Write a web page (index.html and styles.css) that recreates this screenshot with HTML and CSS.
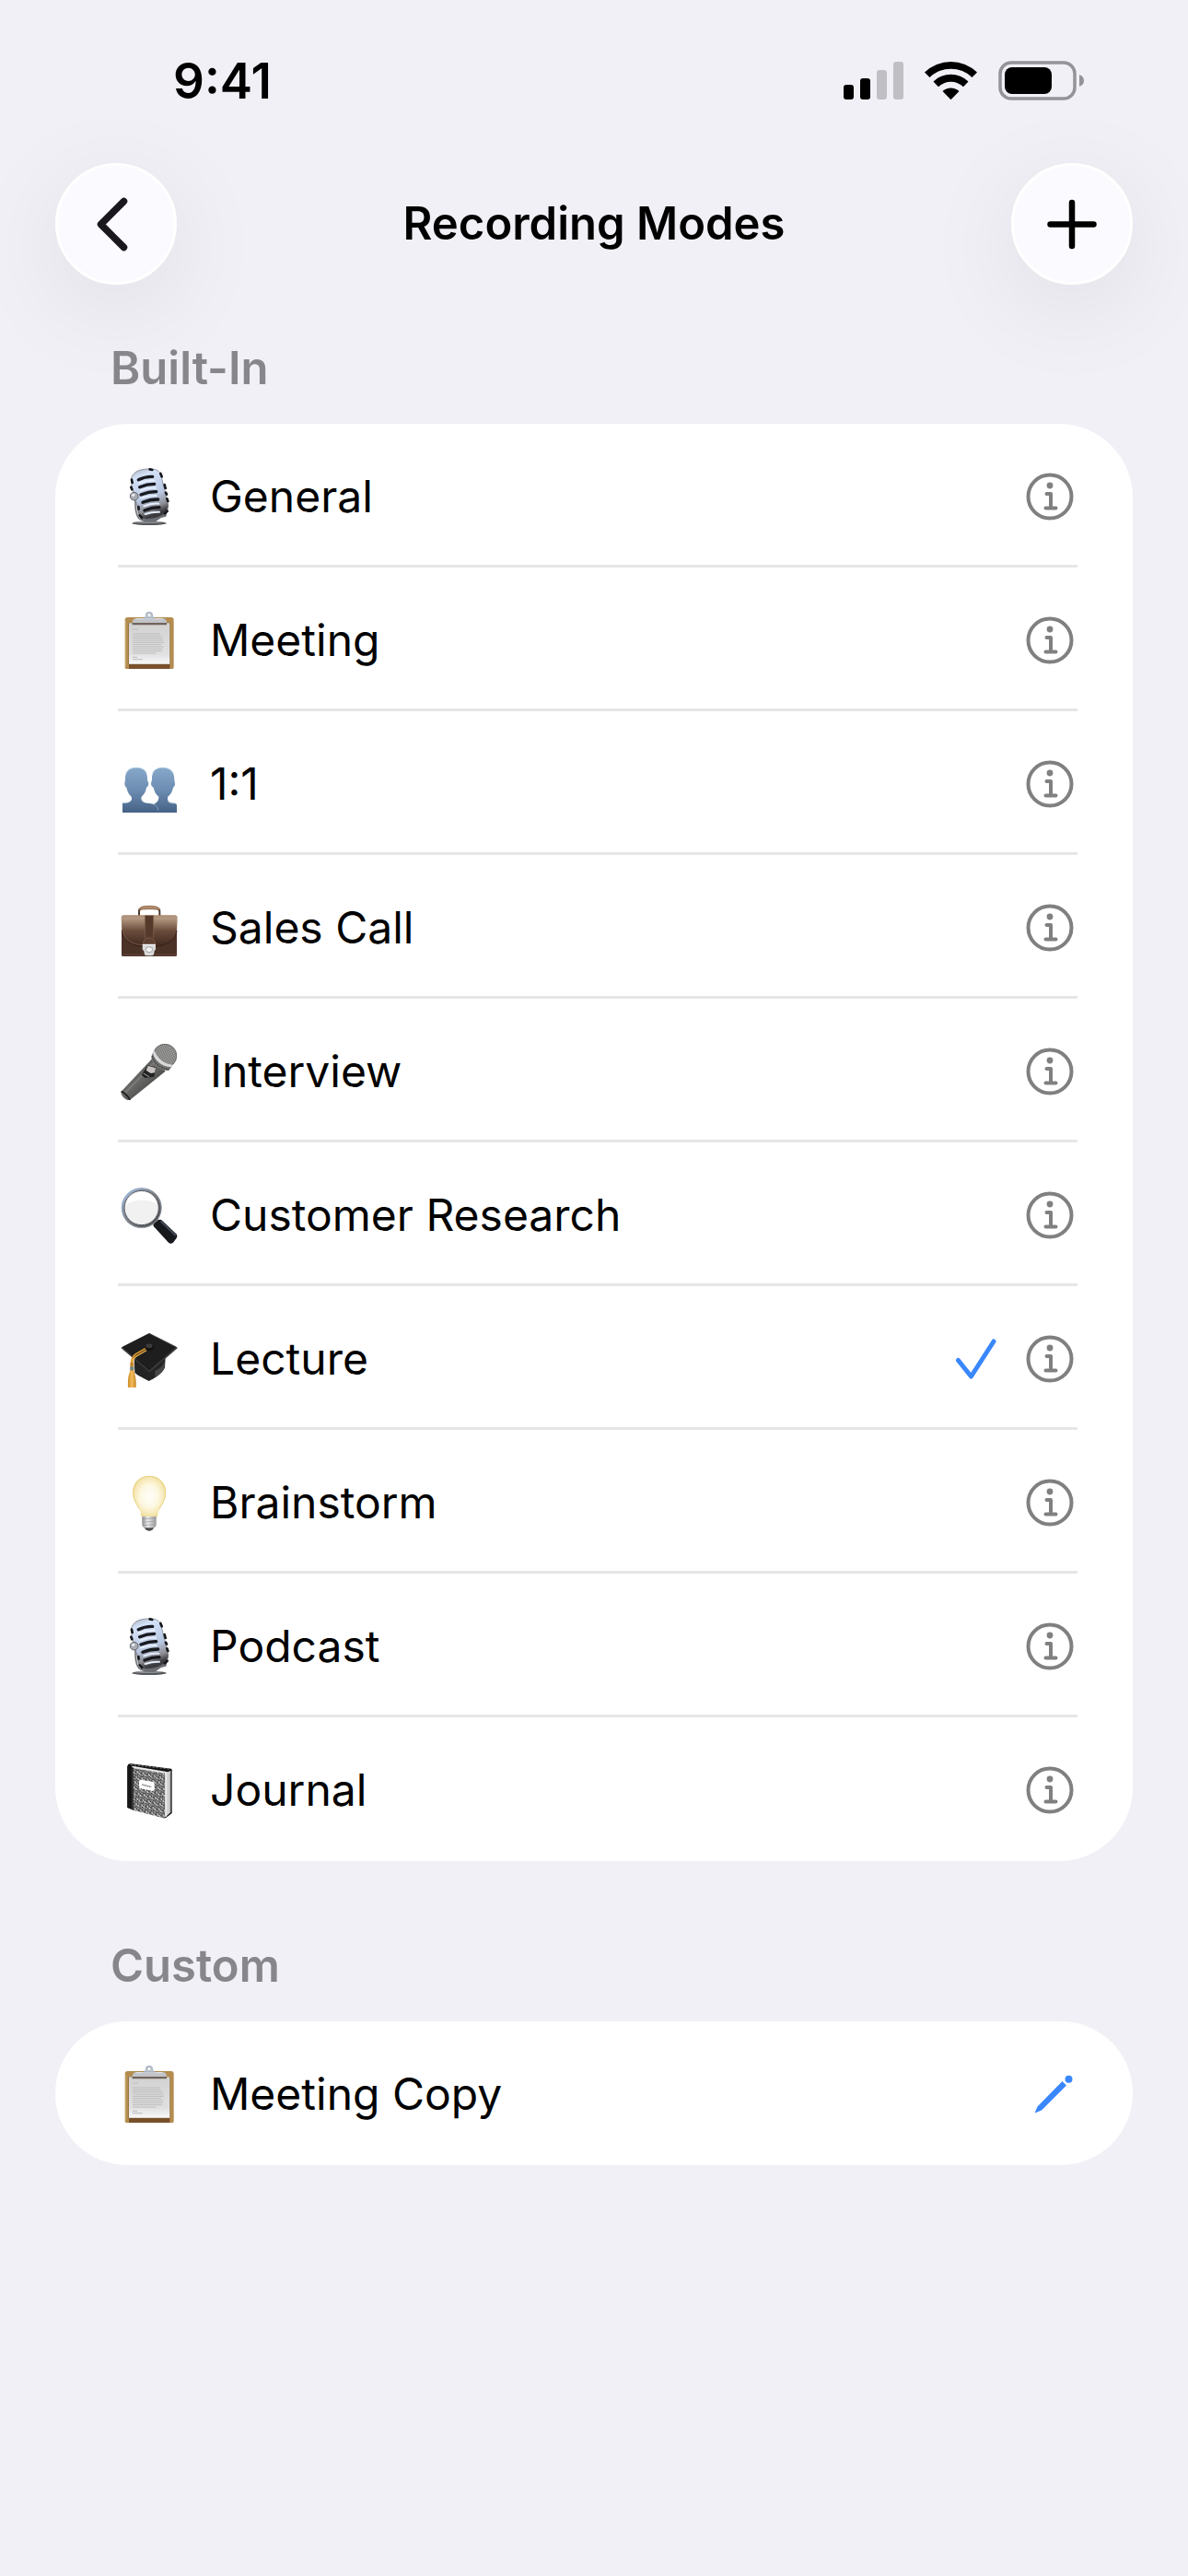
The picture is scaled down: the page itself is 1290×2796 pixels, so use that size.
FILE: index.html
```html
<!DOCTYPE html>
<html lang="en">
<head>
    <meta charset="UTF-8">
    <meta name="viewport" content="width=device-width, initial-scale=1.0">
    <title>Recording Modes</title>
    <link rel="stylesheet" href="styles.css">
</head>
<body>
    <!-- Icon sprite -->
    <svg class="sprite" aria-hidden="true">
        <defs>
            <linearGradient id="chrome" x1="0" y1="0" x2="0.3" y2="1">
                <stop offset="0" stop-color="#a4acb6"/>
                <stop offset="0.2" stop-color="#d3e1f8"/>
                <stop offset="0.65" stop-color="#b9c8e2"/>
                <stop offset="0.88" stop-color="#8b8a90"/>
                <stop offset="1" stop-color="#3c3c40"/>
            </linearGradient>
            <linearGradient id="paper" x1="0" y1="0" x2="0" y2="1">
                <stop offset="0" stop-color="#d2d2d2"/>
                <stop offset="0.75" stop-color="#e0e0e0"/>
                <stop offset="1" stop-color="#f8f8f8"/>
            </linearGradient>
            <linearGradient id="blue" gradientUnits="userSpaceOnUse" x1="0" y1="38" x2="0" y2="186">
                <stop offset="0" stop-color="#87a9cb"/>
                <stop offset="0.5" stop-color="#6d8db2"/>
                <stop offset="1" stop-color="#466286"/>
            </linearGradient>
            <linearGradient id="leather" x1="0" y1="0" x2="0" y2="1">
                <stop offset="0" stop-color="#a98b72"/>
                <stop offset="0.1" stop-color="#b49a82"/>
                <stop offset="0.5" stop-color="#6b4c3b"/>
                <stop offset="1" stop-color="#40291f"/>
            </linearGradient>
            <linearGradient id="handle" x1="0" y1="0" x2="1" y2="1">
                <stop offset="0" stop-color="#3a3a3a"/>
                <stop offset="0.45" stop-color="#6a6a69"/>
                <stop offset="1" stop-color="#2a2a2a"/>
            </linearGradient>
            <linearGradient id="ring" x1="0" y1="0" x2="1" y2="1">
                <stop offset="0" stop-color="#a9c8f2"/>
                <stop offset="0.5" stop-color="#75777c"/>
                <stop offset="1" stop-color="#3f3f43"/>
            </linearGradient>
            <radialGradient id="glow" cx="0.5" cy="0.5" r="0.55">
                <stop offset="0" stop-color="#fffefa"/>
                <stop offset="0.5" stop-color="#fdf8e2"/>
                <stop offset="0.85" stop-color="#f5e6b0"/>
                <stop offset="1" stop-color="#ecd68a"/>
            </radialGradient>
            <linearGradient id="metal" x1="0" y1="0" x2="1" y2="0">
                <stop offset="0" stop-color="#8b8b8e"/>
                <stop offset="0.4" stop-color="#ececee"/>
                <stop offset="1" stop-color="#97979a"/>
            </linearGradient>
            <linearGradient id="tassel" x1="0" y1="0" x2="1" y2="0">
                <stop offset="0" stop-color="#cf8b26"/>
                <stop offset="0.5" stop-color="#f3bd5c"/>
                <stop offset="1" stop-color="#c98422"/>
            </linearGradient>
            <pattern id="mesh" width="5" height="5" patternUnits="userSpaceOnUse" patternTransform="rotate(20)">
                <rect width="5" height="5" fill="#b0b0ae"/>
                <path d="M0 0H5M0 0V5" stroke="#636361" stroke-width="3"/>
            </pattern>
            <pattern id="marble" width="19" height="17" patternUnits="userSpaceOnUse" patternTransform="rotate(13)">
                <rect width="19" height="17" fill="#555"/>
                <path d="M1 2h4v3h3M12 1l3 3M9 8l4-1v4M2 10l3 3M15 9l3 2M8 14h5M17 15l-2 1M5 7l2 2" stroke="#e2e2e2" stroke-width="3" fill="none"/>
                <path d="M8 2l3 2M14 6h3M5 11l3-1M14 13l-2 1M1 15l3 1" stroke="#111" stroke-width="3" fill="none"/>
            </pattern>
        </defs>

        <symbol id="studio-mic" viewBox="0 0 186 186">
            <ellipse cx="93" cy="180" rx="56" ry="6" fill="#55575a"/>
            <ellipse cx="90" cy="177" rx="42" ry="3" fill="#8c8f93"/>
            <path d="M46 98c-2 34 2 62 18 72l18 6h30l20-14 16-4 8-34-6-22z" fill="#6d6f74"/>
            <path d="M52 104c-1 30 3 54 16 62" fill="none" stroke="#c9cbd0" stroke-width="4"/>
            <path d="M34 36C40 12 60 4 88 3s38 4 44 22l22 92c2 22-12 38-38 45s-48 6-54-10L36 58z" fill="url(#chrome)" stroke="#6d7178" stroke-width="2"/>
            <path d="M36 38l2 10M34 62l3 8M134 28l-4-10M146 66l-3-12M150 86l-3-6M154 108l-3-8M152 140l-8 8M95 4l8 2M62 154l7 8M58 126l1 8" stroke="#15171b" stroke-width="8" stroke-linecap="round"/>
            <g fill="none" stroke="#e6effd" stroke-width="6" stroke-linecap="round">
                <path d="M60 49q26-10 50-8M64 73q26-10 50-8M66 98q26-10 50-8M76 124q24-10 48-8M80 150q24-8 46-7"/>
            </g>
            <g fill="none" stroke="#17191e" stroke-width="10" stroke-linecap="round">
                <path d="M58 38q22-11 46-10M62 62q24-10 48-10M66 87q26-10 50-10M72 112q24-10 50-10M78 138q24-10 48-10"/>
            </g>
            <circle cx="44" cy="92" r="13" fill="#a9acb2" stroke="#64676c" stroke-width="3"/>
            <circle cx="41" cy="88" r="5" fill="#e9ecf2"/>
        </symbol>

        <symbol id="clipboard" viewBox="0 0 186 186">
            <rect x="14" y="18" width="159" height="170" rx="9" fill="#b48c4f"/>
            <path d="M17 30v148" stroke="#cba769" stroke-width="3"/>
            <path d="M27 171h133v15H27z" fill="#78512b"/>
            <path d="M25 36h137v135H25z" fill="#8d6a38"/>
            <path d="M27 37h133v133H27z" fill="url(#paper)"/>
            <g stroke="#bcbcbc" stroke-width="3">
                <path d="M39 57h18M39 72h90M39 79h92M39 86h98M39 93h100M39 100h102M39 107h94M39 114h100M39 121h98M39 128h96M39 135h76M39 148h15M39 155h32"/>
            </g>
            <path d="M38 36h112v7H38z" fill="#6f645d"/>
            <path d="M38 36c0-10 6-15 14-15h84c8 0 14 5 14 15z" fill="#c1c3c7"/>
            <path d="M50 23h86" stroke="#e5e7ea" stroke-width="3"/>
            <path d="M74 21c7-2 8-6 8-10a11 10 0 0 1 22 0c0 4 1 8 8 10z" fill="#bfc4ca" stroke="#8ba0bd" stroke-width="2"/>
            <circle cx="93" cy="11" r="4" fill="#fff"/>
        </symbol>

        <symbol id="people" viewBox="0 0 186 186">
            <path d="M137 40c25 0 39 16 38 38 0 6 2 8 2 14s-3 10-6 12c-3 14-8 23-17 30-4 12 3 20 16 21 8 1 13 1 13 8v23H80v-15c14-9 46-12 44-37-9-7-14-16-17-30-3-2-8-6-8-12s3-8 3-14c-1-22 10-38 35-38z" fill="url(#blue)"/>
            <path d="M51 40c26 0 37 16 36 38 0 6 4 8 4 14s-4 10-7 12c-2 14-8 23-16 30-3 12 3 19 20 21 22 1 34 10 34 24v7H6v-31c24 0 34-8 29-21-8-7-13-16-16-30-3-2-6-6-6-12s2-8 2-14c-1-22 11-38 36-38z" fill="url(#blue)"/>
            <path d="M17 58c6-12 17-18 34-18s29 6 34 18M103 58c6-12 17-18 34-18s29 6 34 18" fill="none" stroke="#a9c9de" stroke-width="2"/>
            <path d="M98 156c15 3 24 10 24 23M5 155c12 0 22-1 28-6M154 151c5 5 15 5 27 5" fill="none" stroke="#9cb9d2" stroke-width="2"/>
        </symbol>

        <symbol id="briefcase" viewBox="0 0 186 186">
            <path d="M60 54V40c0-11 9-12 33-12s34 1 34 12v14" fill="none" stroke="#4e392d" stroke-width="6"/>
            <path d="M58 36c4-12 16-14 35-14s32 2 36 14c-12-5-58-5-71 0z" fill="#b2896a" stroke="#795841" stroke-width="2"/>
            <path d="M3 100v80q0 8 8 8h164q8 0 8-8v-80z" fill="#4b3227"/>
            <path d="M5 181h176" stroke="#725347" stroke-width="2"/>
            <path d="M10 52h166q9 0 9 9l-2 42c-4 32-35 50-73 50H76C38 153 7 135 4 103L2 61q0-9 8-9z" fill="url(#leather)"/>
            <path d="M4 103c3 32 34 50 72 50h34c38 0 69-18 73-50" fill="none" stroke="#35201a" stroke-width="3"/>
            <path d="M7 104c5 31 34 45 69 45" fill="none" stroke="#8a6653" stroke-width="2"/>
            <path d="M79 53h28v76H79z" fill="#553a2c"/>
            <path d="M79 53v74M107 53v74" stroke="#8b6852" stroke-width="2"/>
            <path d="M72 148c2-14 8-22 21-22s18 8 20 22z" fill="#5d4031" stroke="#896551" stroke-width="2"/>
            <path d="M71 147h43v17q-5 1-5 10t-8 10H85q-8 0-8-9t-6-11z" fill="#d9d9da"/>
            <path d="M72 148h41" stroke="#fff" stroke-width="3"/>
            <ellipse cx="93" cy="164" rx="11" ry="9" fill="#f4f4f4" stroke="#a5a5a7" stroke-width="3"/>
        </symbol>

        <symbol id="microphone" viewBox="0 0 186 186">
            <path d="M102 52L2 158c-4 10 14 32 28 28l116-94z" fill="url(#handle)"/>
            <path d="M112 60L14 164" stroke="#8a8a88" stroke-width="5" opacity="0.6"/>
            <path d="M2 158c8 2 26 18 28 28" fill="none" stroke="#1b1b1b" stroke-width="5"/>
            <path d="M88 72l27 8-6 30-30 4-11-10z" fill="#222"/>
            <path d="M89 74l25 8-3 15-13 2-15-10z" fill="#c9c2c2"/>
            <path d="M74 99l19 11" stroke="#aaa" stroke-width="3"/>
            <circle cx="144" cy="42" r="39" fill="url(#mesh)"/>
            <circle cx="144" cy="42" r="38" fill="none" stroke="#6f6f6d" stroke-width="3"/>
            <path d="M106 30c8 28 28 46 62 46l-12 14c-30 0-56-20-56-46z" fill="#747472"/>
            <path d="M109 23c10 26 29 44 60 48l-4 8c-33-3-54-22-60-46z" fill="#d8dadc"/>
            <path d="M103 43c5 22 25 40 56 43" fill="none" stroke="#3c3c3a" stroke-width="4" stroke-dasharray="5 3"/>
        </symbol>

        <symbol id="magnifier" viewBox="0 0 186 186">
            <path d="M108 118l14-12 18 16-14 14z" fill="#8b8c91"/>
            <path d="M108 130q-4-5 1-10l12-10q8-5 14 0l46 44q6 7 0 15l-10 13q-8 6-15 0z" fill="#17191c"/>
            <path d="M132 114l46 44" stroke="#4b5361" stroke-width="5" stroke-linecap="round"/>
            <circle cx="68" cy="69" r="61" fill="#f3f3f3" stroke="url(#ring)" stroke-width="9"/>
            <circle cx="68" cy="69" r="64" fill="none" stroke="#a1adbd" stroke-width="2"/>
            <circle cx="68" cy="69" r="56" fill="#f1f1f1" stroke="#4e5057" stroke-width="3"/>
            <path d="M18 60c4-26 24-42 50-43s46 18 49 40c-20-16-74-18-99 3z" fill="#fff"/>
        </symbol>

        <symbol id="grad-cap" viewBox="0 0 186 186">
            <path d="M44 92l2 46c8 8 32 20 46 27 18-8 44-24 52-44l2-32z" fill="#242424"/>
            <path d="M112 132c18-8 28-20 31-34v22c-4 14-18 26-31 34z" fill="#474747"/>
            <path d="M3 55L93 9l91 46-90 80z" fill="#1e1e1e"/>
            <path d="M93 10l89 45-88 77" fill="none" stroke="#555" stroke-width="2"/>
            <path d="M3 56l91 78 90-78" fill="none" stroke="#3d3d3d" stroke-width="4"/>
            <g fill="none">
                <path d="M90 54L48 78q-13 10-12 30" stroke="#d9962f" stroke-width="6"/>
                <path d="M84 65L53 83q-14 9-14 27" stroke="#f0b54e" stroke-width="4"/>
                <path d="M88 60L50 81" stroke="#4d3511" stroke-width="2"/>
            </g>
            <ellipse cx="94" cy="54" rx="15" ry="13" fill="#141414"/>
            <ellipse cx="93" cy="50" rx="11" ry="7" fill="#3b3b3b"/>
            <path d="M31 104h12v28H31z" fill="#c18732"/>
            <path d="M31 119h12v9H31z" fill="#668a93"/>
            <path d="M31 132c-7 14-8 34-7 53q13 3 26 0c1-19-1-39-7-53z" fill="url(#tassel)"/>
        </symbol>

        <symbol id="bulb" viewBox="0 0 186 186">
            <path d="M70 136h46v28c0 8-6 10-10 12q-4 9-13 9t-13-9c-4-2-10-4-10-12z" fill="url(#metal)"/>
            <path d="M70 147l46-4M70 157l46-4M72 167l42-3" stroke="#98999b" stroke-width="2"/>
            <path d="M78 175h30q-4 10-15 10t-15-10z" fill="#4c4d50"/>
            <path d="M93 6c32 0 54 23 54 54 0 25-12 38-20 53-5 10-6 17-7 25H67c-1-8-2-15-7-25-8-15-20-28-20-53 0-31 21-54 53-54z" fill="url(#glow)"/>
            <path d="M93 7c31 0 53 23 53 53 0 24-12 38-20 53M93 7c-31 0-52 23-52 53 0 24 12 38 20 53" fill="none" stroke="#e9d27e" stroke-width="3"/>
        </symbol>

        <symbol id="notebook" viewBox="0 0 186 186">
            <path d="M22 14q2-8 12-7l130 16q3 1 3 5v140l-20 16L22 150z" fill="#111"/>
            <path d="M38 14l116 20 9-4v135l-17 16z" fill="#d3d3d3"/>
            <path d="M36 17l112 19v144" fill="none" stroke="#f2f2f2" stroke-width="3"/>
            <path d="M40 22l104 16v147L40 158z" fill="url(#marble)"/>
            <path d="M22 16l19 6v136l-19-8z" fill="#161616"/>
            <path d="M38 23v134" stroke="#555" stroke-width="2"/>
            <path d="M32 10l130 15" stroke="#777" stroke-width="3" stroke-dasharray="7 5"/>
            <path d="M160 38v130" stroke="#999" stroke-width="2"/>
            <path d="M66 59l40 7q4 2 4 8v17q-1 6-8 4l-36-7q-6-2-6-8V66q0-7 6-7z" fill="#fff"/>
            <path d="M70 75l30 8" stroke="#777" stroke-width="5" stroke-dasharray="4 2"/>
        </symbol>

        <symbol id="info" viewBox="0 0 52 52">
            <circle cx="26" cy="26" r="23.5" fill="none" stroke="currentColor" stroke-width="4"/>
            <circle cx="26" cy="14" r="3.4" fill="currentColor"/>
            <path d="M22.5 23H27v15M21.500 38.500h11" fill="none" stroke="currentColor" stroke-width="4" stroke-linecap="round" stroke-linejoin="round"/>
        </symbol>
    </svg>

    <div class="status-bar">
        <span class="time">9:41</span>
        <div class="status-icons">
            <svg width="65" height="43" viewBox="0 0 65 43">
                <rect x="0" y="26" width="11" height="16" rx="3"/>
                <rect x="18" y="19" width="11" height="23" rx="3"/>
                <rect x="36" y="10" width="11" height="32" rx="3" fill="#c0bfc4"/>
                <rect x="54" y="1" width="11" height="41" rx="3" fill="#c0bfc4"/>
            </svg>
            <svg width="57" height="43" viewBox="0 0 57 43">
                <path d="M0 12.5a41 41 0 0 1 57 0l-5.500 5.500a33 33 0 0 0-46 0z"/>
                <path d="M9.500 22.500a27 27 0 0 1 38 0l-5.500 5.800a19 19 0 0 0-27 0z"/>
                <path d="M19.500 33a13 13 0 0 1 18 0l-9 9.200z"/>
            </svg>
            <svg width="93" height="43" viewBox="0 0 93 43">
                <rect x="2" y="2" width="81" height="39" rx="12" fill="none" stroke="#949397" stroke-width="3.5"/>
                <rect x="7" y="7" width="51" height="29" rx="8"/>
                <path d="M88 15q5 2 5 6.500T88 28z" fill="#949397"/>
            </svg>
        </div>
    </div>

    <header class="nav-bar">
        <button class="round-button" aria-label="Back">
            <svg viewBox="0 0 126 126"><path d="M71.500 38.500L46.500 63.500l25 25" stroke="#1a181e" stroke-width="7.500"/></svg>
        </button>
        <h1>Recording Modes</h1>
        <button class="round-button" aria-label="Add mode">
            <svg viewBox="0 0 126 126"><path d="M39.500 63.500h47M63 40v47" stroke="#000" stroke-width="6.500"/></svg>
        </button>
    </header>

    <main>
        <section>
            <h2>Built-In</h2>
            <ul class="card">
                <li>
                    <button class="mode"><svg class="emoji"><use href="#studio-mic"/></svg>General</button>
                    <button class="action" aria-label="About General"><svg><use href="#info"/></svg></button>
                </li>
                <li>
                    <button class="mode"><svg class="emoji"><use href="#clipboard"/></svg>Meeting</button>
                    <button class="action" aria-label="About Meeting"><svg><use href="#info"/></svg></button>
                </li>
                <li>
                    <button class="mode"><svg class="emoji"><use href="#people"/></svg>1:1</button>
                    <button class="action" aria-label="About 1:1"><svg><use href="#info"/></svg></button>
                </li>
                <li>
                    <button class="mode"><svg class="emoji"><use href="#briefcase"/></svg>Sales Call</button>
                    <button class="action" aria-label="About Sales Call"><svg><use href="#info"/></svg></button>
                </li>
                <li>
                    <button class="mode"><svg class="emoji"><use href="#microphone"/></svg>Interview</button>
                    <button class="action" aria-label="About Interview"><svg><use href="#info"/></svg></button>
                </li>
                <li>
                    <button class="mode"><svg class="emoji"><use href="#magnifier"/></svg>Customer Research</button>
                    <button class="action" aria-label="About Customer Research"><svg><use href="#info"/></svg></button>
                </li>
                <li>
                    <button class="mode" aria-pressed="true">
                        <svg class="emoji"><use href="#grad-cap"/></svg>Lecture
                        <svg class="check" viewBox="0 0 44 44"><path d="M2.500 23.500L16.500 41 41 3"/></svg>
                    </button>
                    <button class="action" aria-label="About Lecture"><svg><use href="#info"/></svg></button>
                </li>
                <li>
                    <button class="mode"><svg class="emoji"><use href="#bulb"/></svg>Brainstorm</button>
                    <button class="action" aria-label="About Brainstorm"><svg><use href="#info"/></svg></button>
                </li>
                <li>
                    <button class="mode"><svg class="emoji"><use href="#studio-mic"/></svg>Podcast</button>
                    <button class="action" aria-label="About Podcast"><svg><use href="#info"/></svg></button>
                </li>
                <li>
                    <button class="mode"><svg class="emoji"><use href="#notebook"/></svg>Journal</button>
                    <button class="action" aria-label="About Journal"><svg><use href="#info"/></svg></button>
                </li>
            </ul>
        </section>

        <section>
            <h2>Custom</h2>
            <ul class="card">
                <li>
                    <button class="mode"><svg class="emoji"><use href="#clipboard"/></svg>Meeting Copy</button>
                    <button class="action edit" aria-label="Edit Meeting Copy">
                        <svg viewBox="0 0 52 52">
                            <path d="M10 45.500l2.500-6L39.500 12l4.500 4.500L17 43.500l-6 2.500q-1.500.5-1-.5z"/>
                            <circle cx="46.500" cy="9.800" r="4"/>
                        </svg>
                    </button>
                </li>
            </ul>
        </section>
    </main>
</body>
</html>
```
FILE: styles.css
```css
/* General Styles */
* {
    box-sizing: border-box;
}

body {
    margin: 0;
    min-height: 100vh;
    background: #f1f0f6;
    color: #000;
    font-family: Inter, "Liberation Sans", sans-serif;
    font-size: 48px;
    line-height: 60px;
}

button {
    padding: 0;
    border: none;
    background: none;
    color: inherit;
    font: inherit;
    cursor: pointer;
}

h1,
h2 {
    margin: 0;
    font-size: 49px;
    font-weight: 600;
}

.sprite {
    position: absolute;
    width: 0;
    height: 0;
}

/* Status bar */
.status-bar {
    display: flex;
    align-items: center;
    justify-content: space-between;
    height: 174px;
    padding: 0 113px 0 188px;
}

.time {
    padding-top: 2px;
    font-size: 53px;
    font-weight: 600;
}

.status-icons {
    display: flex;
    gap: 23px;
}

/* Navigation */
.nav-bar {
    display: flex;
    align-items: center;
    justify-content: space-between;
    padding: 3px 60px 0;
}

.round-button {
    width: 132px;
    height: 132px;
    border: 3px solid #fff;
    border-radius: 50%;
    background: #fafaff;
    box-shadow: 0 24px 108px rgba(0, 0, 0, 0.08);
}

.round-button svg {
    display: block;
    fill: none;
    stroke-linecap: round;
    stroke-linejoin: round;
}

/* Lists */
main {
    display: flex;
    flex-direction: column;
    gap: 84px;
    padding: 61px 60px;
}

h2 {
    margin: 0 60px 30px;
    color: #87868b;
}

.card {
    margin: 0;
    padding: 0 60px 0 68px;
    list-style: none;
    background: #fff;
    border-radius: 80px;
}

.card li {
    display: flex;
    align-items: center;
    height: 156px;
    padding-top: 4px;
    border-bottom: 3px solid #e6e6e6;
}

.card li:last-child {
    border-color: transparent;
}

.mode {
    display: flex;
    flex: 1;
    align-items: center;
    text-align: left;
}

.emoji {
    width: 62px;
    height: 62px;
    margin: 0 35px 0 3px;
}

.check {
    width: 44px;
    height: 44px;
    margin: 0 28px 0 auto;
    fill: none;
    stroke: #3a87fd;
    stroke-width: 5;
    stroke-linecap: round;
    stroke-linejoin: round;
}

.action {
    display: flex;
    justify-content: center;
    width: 60px;
    color: #808080;
}

.action svg {
    width: 52px;
    height: 52px;
}

.edit {
    fill: #3a87fd;
}
```
